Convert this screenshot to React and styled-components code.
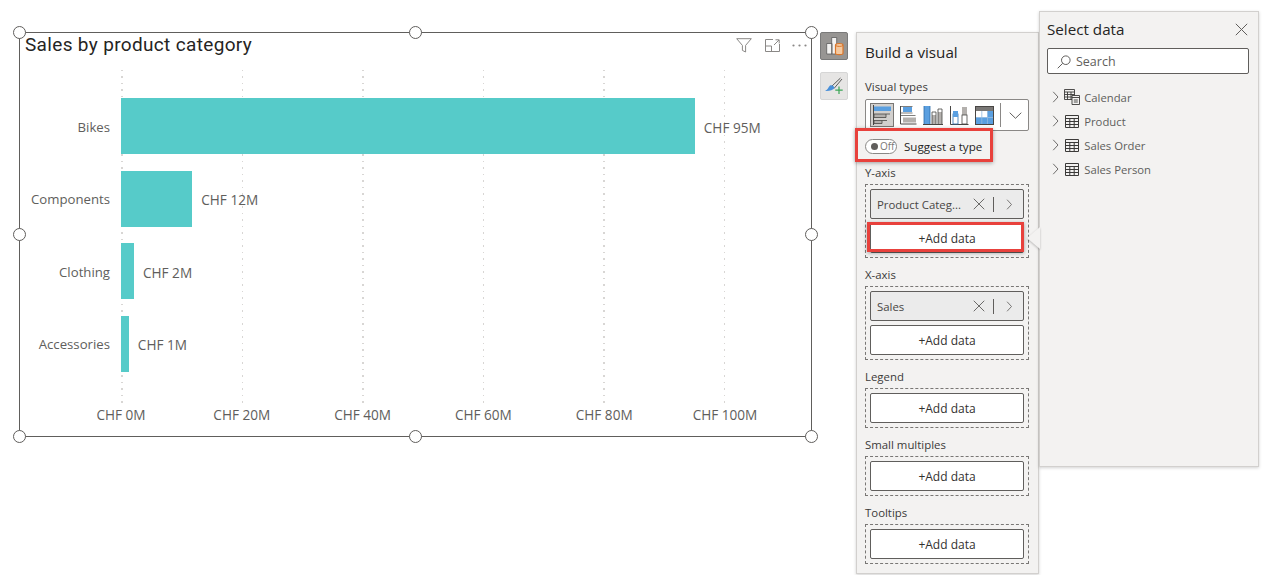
import React from 'react';
import styled, {createGlobalStyle} from 'styled-components';

const sans = `'Open Sans', 'Noto Sans', sans-serif`;
const line = '#605e5c';
const blue = '#5a9fe0';
const grey = '#b3b0ad';

const GlobalStyle = createGlobalStyle`
  html, body {
    margin: 0;
    padding: 0;
    background: #fff;
    font-family: ${sans};
    overflow: hidden;
  }
`;

const Page = styled.div`
  display: flex;
  align-items: flex-start;
  width: 1262px;
  height: 575px;
  box-sizing: border-box;
  padding: 11px 0 0 19px;
`;

/* chart visual */
const Visual = styled.section`
  position: relative;
  box-sizing: border-box;
  flex: none;
  width: 793px;
  height: 405px;
  margin-top: 21px;
  border: 1.5px solid ${line};
`;

const HandleLayer = styled.div`
  position: absolute;
  inset: -0.75px;
`;

const Handle = styled.span`
  position: absolute;
  box-sizing: border-box;
  width: 13px;
  height: 13px;
  margin: -6.5px 0 0 -6.5px;
  left: ${p => p.$x}%;
  top: ${p => p.$y}%;
  background: #fff;
  border: 1.2px solid ${line};
  border-radius: 50%;
`;

const VisualHeader = styled.header`
  display: flex;
  align-items: center;
  justify-content: space-between;
  height: 24px;
  padding: 0 4px 0 5px;
`;

const VisualTitle = styled.h2`
  margin: 0;
  font: 400 19px/24px Roboto, sans-serif;
  letter-spacing: 0.34px;
  color: #252423;
`;

const HeaderIcons = styled.div`
  display: flex;
  align-items: center;
  gap: 12.5px;
  color: #8a8886;
`;

const Plot = styled.div`
  position: relative;
  margin: 13px 0 0 101px;
  width: 604px;
  padding: 20px 0 23px;
`;

const Gridlines = styled.div`
  position: absolute;
  inset: 0;
  display: flex;
  justify-content: space-between;
`;

const Gridline = styled.i`
  width: 1.5px;
  background: repeating-linear-gradient(#d8d6d4 0 1.5px, transparent 1.5px 6.5px);
`;

const BarRow = styled.div`
  position: relative;
  display: flex;
  align-items: center;
  height: 72.5px;
`;

const BarLabel = styled.span`
  position: absolute;
  right: 100%;
  margin-right: 11px;
  padding-top: 1px;
  font-size: 13.2px;
  color: #605e5c;
  white-space: nowrap;
`;

const Bar = styled.div`
  flex: none;
  width: ${p => p.$value * 6.04}px;
  height: 56px;
  background: #56cbc9;
`;

const BarValue = styled.span`
  margin-left: 9px;
  padding-top: 2px;
  font-size: 13.6px;
  color: #605e5c;
  white-space: nowrap;
`;

const Axis = styled.div`
  display: flex;
  justify-content: space-between;
  width: 604px;
  margin: 3px 0 0 101px;
`;

const Tick = styled.span`
  display: flex;
  justify-content: center;
  width: 0;
  font-size: 13.6px;
  line-height: 18px;
  color: #605e5c;
  white-space: nowrap;
`;

/* little toolbar between chart and panes */
const ToolColumn = styled.div`
  display: flex;
  flex-direction: column;
  gap: 12px;
  margin: 21px 8px 0 8px;
`;

const ToolButton = styled.button`
  display: flex;
  align-items: center;
  justify-content: center;
  width: 28px;
  height: 28px;
  padding: 0;
  border: 1px solid ${p => (p.$active ? '#7a7a7a' : '#d6d6d6')};
  border-radius: 2px;
  background: ${p => (p.$active ? '#979593' : '#e6e5e4')};
`;

/* build pane */
const BuildPane = styled.aside`
  box-sizing: border-box;
  flex: none;
  width: 183px;
  height: 542px;
  margin-top: 21px;
  padding: 9px 8px 0;
  background: #f3f2f1;
  border: 1px solid #d2d0ce;
  box-shadow: 0 1px 3px rgba(0, 0, 0, .18);
`;

const PaneTitle = styled.h3`
  margin: 0;
  font-size: 15.2px;
  line-height: 20px;
  font-weight: 500;
  color: #252423;
`;

const FieldLabel = styled.div`
  font-size: 11.4px;
  line-height: 16px;
  color: #3b3a39;
`;

const TypesLabel = styled(FieldLabel)`
  margin-top: 17px;
`;

const TypesBar = styled.div`
  display: flex;
  align-items: center;
  box-sizing: border-box;
  width: 164px;
  height: 32px;
  margin-top: 4px;
  padding-left: 4px;
  gap: 1.6px;
  background: #fff;
  border: 1px solid #8a8886;
  border-radius: 2px;
`;

const TypeButton = styled.span`
  display: flex;
  align-items: center;
  justify-content: center;
  flex: none;
  box-sizing: border-box;
  width: 24px;
  height: 24px;
  background: ${p => (p.$active ? '#d2d0ce' : 'transparent')};
  border: 1px solid ${p => (p.$active ? '#797775' : 'transparent')};
`;

const TypesDivider = styled.i`
  width: 1px;
  height: 24px;
  margin: 0 6px 0 2px;
  background: #8a8886;
`;

const SuggestRow = styled.div`
  position: relative;
  display: flex;
  align-items: center;
  gap: 7px;
  width: fit-content;
  height: 16px;
  margin-top: 7px;
  font-size: 11.6px;
  color: #252423;
`;

const Highlight = styled.span`
  position: absolute;
  inset: ${p => p.$inset};
  border: 3px solid #e8413c;
  box-shadow: 0 1px 4px rgba(0, 0, 0, .35);
  pointer-events: none;
`;

const Toggle = styled.span`
  display: flex;
  align-items: center;
  gap: 2px;
  box-sizing: border-box;
  width: 32px;
  height: 15px;
  padding-left: 5px;
  background: #fff;
  border: 1px solid #8a8886;
  border-radius: 8px;
  font-size: 10px;
  color: #797775;

  &::before {
    content: '';
    width: 7px;
    height: 7px;
    border-radius: 50%;
    background: #605e5c;
  }
`;

const Section = styled.div`
  margin-top: ${p => p.$gap}px;
`;

const Well = styled.div`
  display: flex;
  flex-direction: column;
  gap: 4px;
  box-sizing: border-box;
  width: 164px;
  margin-top: 3px;
  padding: 4px;
  border: 1px dashed #797775;
`;

const Chip = styled.div`
  display: flex;
  align-items: center;
  box-sizing: border-box;
  height: 30px;
  padding: 0 10px 0 6px;
  background: #ebebeb;
  border: 1px solid #605e5c;
  border-radius: 2px;
  font-size: 11.4px;
  color: #484644;
`;

const ChipName = styled.span`
  flex: 1;
  white-space: nowrap;
`;

const ChipDivider = styled.i`
  width: 1px;
  height: 15px;
  margin: 0 12px 0 8px;
  background: #605e5c;
`;

const AddButton = styled.button`
  position: relative;
  box-sizing: border-box;
  height: 30px;
  padding: 0;
  background: #fff;
  border: 1px solid #605e5c;
  border-radius: 2px;
  font: 12px ${sans};
  color: #323130;
`;

/* select data pane */
const DataPane = styled.aside`
  position: relative;
  box-sizing: border-box;
  flex: none;
  width: 220px;
  height: 456px;
  padding: 7px 7px 0;
  background: #f3f2f1;
  border: 1px solid #d2d0ce;
  box-shadow: 0 1px 3px rgba(0, 0, 0, .18);
`;

const Callout = styled.span`
  position: absolute;
  right: 100%;
  top: 215px;
  width: 0;
  height: 0;
  border: 11px solid transparent;
  border-left: 0;
  border-right: 13px solid #f3f2f1;
  filter: drop-shadow(0 1px 1px rgba(0, 0, 0, .25));
`;

const DataHeader = styled.div`
  display: flex;
  align-items: center;
  justify-content: space-between;
  height: 20px;
  padding-right: 3px;
`;

const SearchBox = styled.div`
  display: flex;
  align-items: center;
  gap: 5px;
  box-sizing: border-box;
  width: 202px;
  height: 26px;
  margin-top: 9px;
  padding: 1px 0 0 9px;
  background: #fff;
  border: 1px solid #605e5c;
  border-radius: 2px;
  font-size: 12.5px;
  color: #605e5c;
`;

const Tree = styled.ul`
  margin: 11px 0 0;
  padding: 0 0 0 5px;
  list-style: none;
`;

const TreeRow = styled.li`
  display: flex;
  align-items: center;
  gap: 4.5px;
  height: 24px;
  font-size: 11.3px;
  color: #605e5c;
`;

const TreeIconSlot = styled.span`
  display: flex;
  justify-content: center;
  width: 16px;
`;

const Chevron = ({size = 12}) => (
  <svg width={size * 0.6} height={size} viewBox="0 0 6 12" fill="none" stroke="#605e5c" strokeWidth="0.9">
    <path d="M.6.8 5.4 6 .6 11.2"/>
  </svg>
);

const Cross = ({size = 13, color = '#605e5c'}) => (
  <svg width={size} height={size} viewBox="0 0 13 13" fill="none" stroke={color} strokeWidth="1">
    <path d="M.8.8l11.4 11.4M12.2.8.8 12.2"/>
  </svg>
);

const FilterIcon = () => (
  <svg width="16" height="15" viewBox="0 0 16 15" fill="none" stroke="#8a8886" strokeWidth="1">
    <path d="M.7.7h14.600L9.600 7.400V14L6.400 12.400v-5z"/>
  </svg>
);

const FocusIcon = () => (
  <svg width="15" height="13" viewBox="0 0 15 13" fill="none" stroke="#8a8886" strokeWidth="1">
    <path d="M8 .5H.5v12h14V5M.5 7h6v5.5M9 6l5-5M10.5.8h3.700v3.700"/>
  </svg>
);

const MoreIcon = () => (
  <svg width="15" height="3" viewBox="0 0 15 3" fill="#8a8886">
    <circle cx="1.500" cy="1.500" r="1.100"/><circle cx="7.500" cy="1.500" r="1.100"/><circle cx="13.500" cy="1.500" r="1.100"/>
  </svg>
);

const BuildIcon = () => (
  <svg width="22" height="22" viewBox="0 0 22 22" fill="none">
    <path d="M3.700 8.500H9V19H3.700zM8.700 2.500h5V19h-5z" fill="#f3f2f1" stroke="#5a5a5a" strokeWidth="0.8"/>
    <path d="M12.500 10c0-2 7.500-2 7.500 0v8.500c0 1.500-7.500 1.500-7.500 0z" fill="#f4c9a0" stroke="#d9762b" strokeWidth="1.200"/>
    <path d="M12.500 10.500c1.500 1.200 6 1.200 7.500 0" stroke="#d9762b" strokeWidth="1"/>
  </svg>
);

const FormatIcon = () => (
  <svg width="22" height="22" viewBox="0 0 22 22" fill="none">
    <path d="M17.500 3 8.500 11.500M19 4l-8 9.500" stroke="#4a4a4a" strokeWidth=".9"/>
    <path d="M7 10.500c2-.8 3.800.3 4.500 2.500-1.500 2-5.500 3.500-9.500 3 2.500-1 3.200-3.500 5-5.500z" fill="#4a90d9"/>
    <path d="M16 11.500v7.500M12.300 15.200h7.400" stroke="#3aa655" strokeWidth="1.200"/>
  </svg>
);

const StackedBarIcon = () => (
  <svg width="22" height="22" viewBox="0 0 22 22">
    <path d="M2.500 1v20" stroke="#484644" fill="none"/>
    <rect x="3" y="2.500" width="17" height="4.500" fill={blue}/>
    <path d="M3 10h12v3.500H3zM3 16.500h8v3H3zM15 10h4M11 16.500h5" fill={grey} stroke="#484644" strokeWidth=".8"/>
  </svg>
);

const ClusteredBarIcon = () => (
  <svg width="22" height="22" viewBox="0 0 22 22">
    <path d="M3.500 2v18h16" stroke="#484644" fill="none"/>
    <path d="M3.500 2.500h12M3.500 9h12" stroke="#484644" strokeWidth=".7" fill="none"/>
    <rect x="6" y="3" width="9" height="5" fill={blue}/>
    <path d="M3.500 11.500h15" stroke="#484644" strokeWidth=".7" fill="none"/>
    <rect x="6" y="13.500" width="13" height="5" fill={grey}/>
  </svg>
);

const StackedColumnIcon = () => (
  <svg width="22" height="22" viewBox="0 0 22 22">
    <path d="M1 20.500h20" stroke="#484644" fill="none"/>
    <rect x="2" y="2" width="6" height="18" fill={blue}/>
    <path d="M2 2v18M8 2v18" stroke="#2f6da8" strokeWidth=".8"/>
    <rect x="10" y="11" width="4" height="9" fill={grey}/>
    <path d="M10 8h4v12M10 8v12" fill="none" stroke="#484644" strokeWidth=".8"/>
    <rect x="16" y="8" width="4" height="12" fill={grey}/>
    <path d="M16 5h4v15M16 5v15" fill="none" stroke="#484644" strokeWidth=".8"/>
  </svg>
);

const ClusteredColumnIcon = () => (
  <svg width="22" height="22" viewBox="0 0 22 22">
    <path d="M2.500 2v18.500h18" stroke="#484644" fill="none"/>
    <rect x="5" y="10" width="5" height="10" fill="#fff" stroke="#2f6da8" strokeWidth=".8"/>
    <rect x="5" y="7" width="5" height="6" fill={blue}/>
    <rect x="14" y="3" width="5" height="8" fill={grey}/>
    <rect x="14" y="11" width="5" height="9" fill="#fff" stroke="#484644" strokeWidth=".8"/>
    <path d="M11.500 20.500h1" stroke="#484644"/>
  </svg>
);

const TableTypeIcon = () => (
  <svg width="19" height="19" viewBox="0 0 19 19">
    <rect x=".5" y=".5" width="18" height="18" fill="#fff" stroke="#484644"/>
    <rect x="1" y="1" width="17" height="4" fill="#797775"/>
    <rect x="12.500" y="5" width="5.500" height="6.500" fill={blue}/>
    <rect x="1" y="11.500" width="17" height="6.500" fill={blue}/>
    <path d="M6.800 5v13M12.500 5v13M1 11.500h17" stroke="#8fb9df" strokeWidth=".8"/>
  </svg>
);

const TableIcon = () => (
  <svg width="14" height="13" viewBox="0 0 14 13" fill="none" stroke="#3b3a39" strokeWidth="1">
    <path d="M.5.5h13v12H.5zM.5 3.500h13M.5 6.500h13M.5 9.500h13M4.800 3.500v9M9.200 3.500v9"/>
  </svg>
);

const CalendarIcon = () => (
  <svg width="16" height="16" viewBox="0 0 16 16" fill="#f3f2f1" stroke="#3b3a39" strokeWidth=".9">
    <path d="M.5.500h10v10H.5zM.5 3h10M.5 5.500h10M.5 8h10M3.500 3v7.500M7 3v7.500"/>
    <path d="M8 6.500h7.500v9H8zM8 8.500h7.500M9.800 11h4M9.800 13h4"/>
  </svg>
);

const SearchIcon = () => (
  <svg width="14" height="14" viewBox="0 0 14 14" fill="none" stroke="#605e5c" strokeWidth="1">
    <circle cx="8.800" cy="5.200" r="4.300"/>
    <path d="M5.700 8.300.7 13.300"/>
  </svg>
);

const bars = [
  {name: 'Bikes', value: 95, label: 'CHF 95M'},
  {name: 'Components', value: 11.8, label: 'CHF 12M'},
  {name: 'Clothing', value: 2.15, label: 'CHF 2M'},
  {name: 'Accessories', value: 1.3, label: 'CHF 1M'},
];

const ticks = ['CHF 0M', 'CHF 20M', 'CHF 40M', 'CHF 60M', 'CHF 80M', 'CHF 100M'];

const handles = [[0, 0], [50, 0], [100, 0], [0, 50], [100, 50], [0, 100], [50, 100], [100, 100]];

const FieldChip = ({children}) => (
  <Chip>
    <ChipName>{children}</ChipName>
    <Cross size={12}/>
    <ChipDivider/>
    <Chevron size={11}/>
  </Chip>
);

export default function App() {
  return (
    <Page>
      <GlobalStyle/>

      <Visual>
        <VisualHeader>
          <VisualTitle>Sales by product category</VisualTitle>
          <HeaderIcons>
            <FilterIcon/>
            <FocusIcon/>
            <MoreIcon/>
          </HeaderIcons>
        </VisualHeader>
        <Plot>
          <Gridlines>
            {ticks.map(t => <Gridline key={t}/>)}
          </Gridlines>
          {bars.map(b => (
            <BarRow key={b.name}>
              <BarLabel>{b.name}</BarLabel>
              <Bar $value={b.value}/>
              <BarValue>{b.label}</BarValue>
            </BarRow>
          ))}
        </Plot>
        <Axis>
          {ticks.map(t => <Tick key={t}>{t}</Tick>)}
        </Axis>
        <HandleLayer>
          {handles.map(([x, y]) => <Handle key={`${x}-${y}`} $x={x} $y={y}/>)}
        </HandleLayer>
      </Visual>

      <ToolColumn>
        <ToolButton $active><BuildIcon/></ToolButton>
        <ToolButton><FormatIcon/></ToolButton>
      </ToolColumn>

      <BuildPane>
        <PaneTitle>Build a visual</PaneTitle>
        <TypesLabel>Visual types</TypesLabel>
        <TypesBar>
          <TypeButton $active><StackedBarIcon/></TypeButton>
          <TypeButton><ClusteredBarIcon/></TypeButton>
          <TypeButton><StackedColumnIcon/></TypeButton>
          <TypeButton><ClusteredColumnIcon/></TypeButton>
          <TypeButton><TableTypeIcon/></TypeButton>
          <TypesDivider/>
          <svg width="13" height="7" viewBox="0 0 13 7" fill="none" stroke="#605e5c"><path d="M.7.7 6.500 6.300 12.300.7"/></svg>
        </TypesBar>
        <SuggestRow>
          <Toggle>Off</Toggle>
          Suggest a type
          <Highlight $inset="-10px -11px -8px -10px"/>
        </SuggestRow>

        <Section $gap={11}>
          <FieldLabel>Y-axis</FieldLabel>
          <Well>
            <FieldChip>Product Categ...</FieldChip>
            <AddButton>
              +Add data
              <Highlight $inset="-2px -1px 0 -4px"/>
            </AddButton>
          </Well>
        </Section>
        <Section $gap={9}>
          <FieldLabel>X-axis</FieldLabel>
          <Well>
            <FieldChip>Sales</FieldChip>
            <AddButton>+Add data</AddButton>
          </Well>
        </Section>
        {['Legend', 'Small multiples', 'Tooltips'].map(label => (
          <Section $gap={9} key={label}>
            <FieldLabel>{label}</FieldLabel>
            <Well>
              <AddButton>+Add data</AddButton>
            </Well>
          </Section>
        ))}
      </BuildPane>

      <DataPane>
        <Callout/>
        <DataHeader>
          <PaneTitle>Select data</PaneTitle>
          <Cross size={13}/>
        </DataHeader>
        <SearchBox><SearchIcon/>Search</SearchBox>
        <Tree>
          <TreeRow><Chevron/><TreeIconSlot><CalendarIcon/></TreeIconSlot>Calendar</TreeRow>
          {['Product', 'Sales Order', 'Sales Person'].map(name => (
            <TreeRow key={name}><Chevron/><TreeIconSlot><TableIcon/></TreeIconSlot>{name}</TreeRow>
          ))}
        </Tree>
      </DataPane>
    </Page>
  );
}
